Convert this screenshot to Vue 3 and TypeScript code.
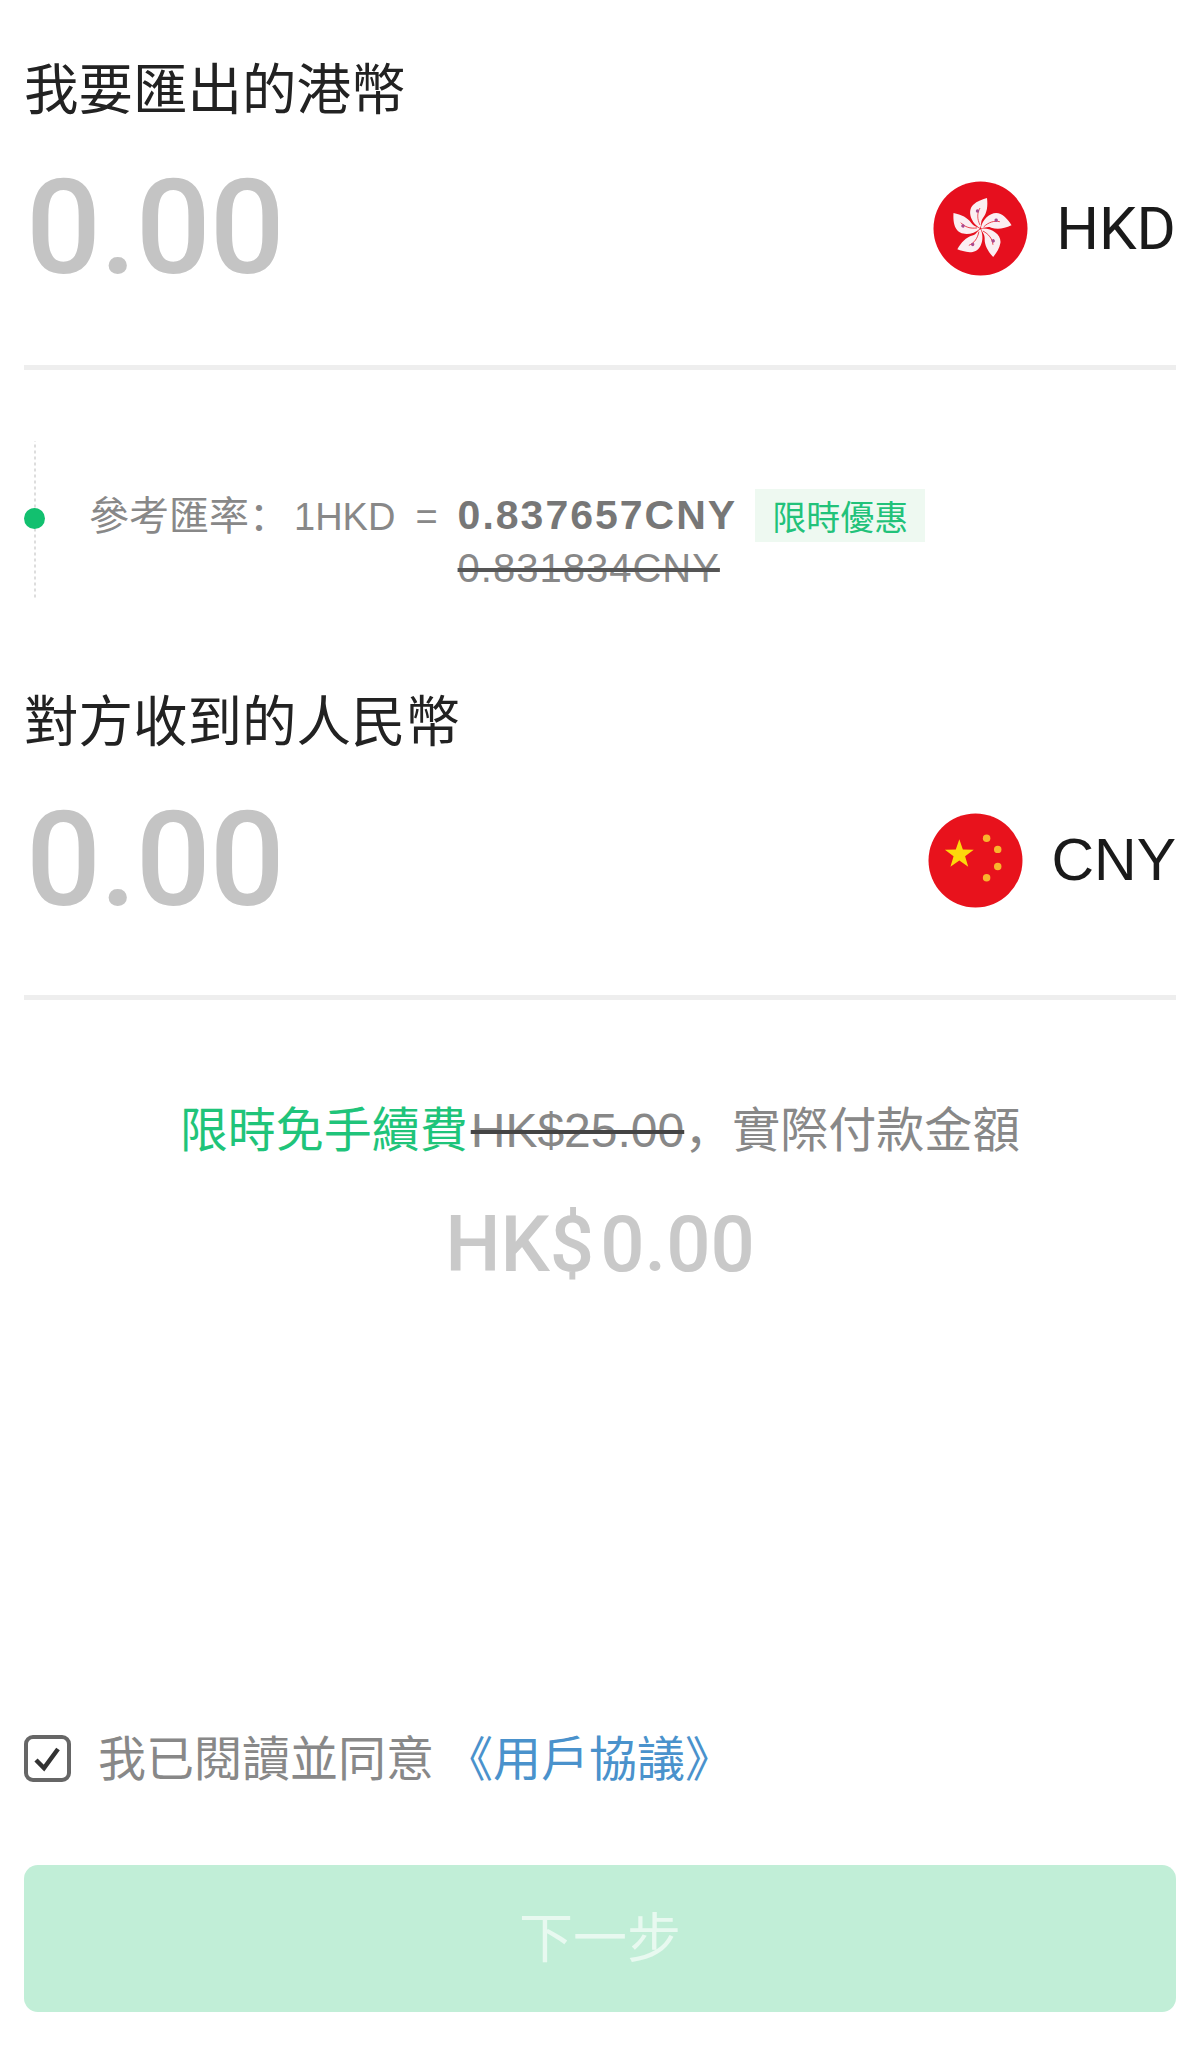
<script setup lang="ts">
// 紫荊花瓣的旋轉角度
const petals = [0, 72, 144, 216, 288];

// 國旗小星的位置
const smallStars = [
    { cx: 58, cy: 25 },
    { cx: 69, cy: 36 },
    { cx: 69, cy: 53 },
    { cx: 58, cy: 64 }
];
</script>

<template>
    <div class="page">
        <div class="field">
            <div class="field-label">我要匯出的港幣</div>
            <div class="field-row">
                <span class="amount">0.00</span>
                <div class="currency">
                    <svg class="flag" viewBox="0 0 95 95">
                        <circle cx="47.5" cy="47.5" r="47" fill="#e60f1e" />
                        <g v-for="deg in petals" :key="deg" :transform="`rotate(${deg} 47.5 47.5)`">
                            <path d="M47 47C38 42 34 30 40 24C44 20 50 18 54 17C55 25 54 32 50 37C47 41 49 44 47 47Z" fill="#fbeef2" />
                            <path d="M47 44C44 38 44 32 47 27" fill="none" stroke="#e60f1e" stroke-width="0.7" />
                            <circle cx="44.5" cy="30" r="1.7" fill="#a9488f" />
                        </g>
                    </svg>
                    <span class="currency-code currency-code-hkd">HKD</span>
                </div>
            </div>
        </div>

        <div class="rate">
            <div class="rate-rail">
                <span class="rate-dot"></span>
            </div>
            <div class="rate-prefix">
                <span>參考匯率<span class="punct">：</span></span><span class="rate-pair">1HKD</span><span class="rate-eq">=</span>
            </div>
            <div class="rate-values">
                <div class="rate-current">
                    <span class="rate-number">0.837657CNY</span>
                    <span class="rate-tag">限時優惠</span>
                </div>
                <div class="rate-old">0.831834CNY</div>
            </div>
        </div>

        <div class="field field-last">
            <div class="field-label">對方收到的人民幣</div>
            <div class="field-row">
                <span class="amount">0.00</span>
                <div class="currency">
                    <svg class="flag" viewBox="0 0 94 94">
                        <circle cx="47" cy="47" r="46.5" fill="#e8121c" />
                        <polygon points="31,26 34.5,36.2 45.3,36.4 36.7,42.9 39.8,53.3 31,47.1 22.2,53.3 25.3,42.9 16.7,36.4 27.5,36.2" fill="#fdd80b" />
                        <circle v-for="star in smallStars" :key="star.cy" :cx="star.cx" :cy="star.cy" r="3.7" fill="#f9b52c" />
                    </svg>
                    <span class="currency-code">CNY</span>
                </div>
            </div>
        </div>

        <div class="fee">
            <span class="fee-free">限時免手續費</span><span class="fee-old">HK$25.00</span><span class="punct">，</span>實際付款金額
        </div>
        <div class="total"><span class="total-symbol">HK$</span>0.00</div>

        <div class="agreement">
            <svg class="checkbox" viewBox="0 0 47 47">
                <rect x="2" y="2" width="43" height="43" rx="7" fill="none" stroke="#666" stroke-width="4" />
                <path d="M12 25L20 33L34 14" fill="none" stroke="#333" stroke-width="4.5" />
            </svg>
            <span class="agreement-text">我已閱讀並同意</span>
            <a class="agreement-text agreement-link">《用戶協議》</a>
        </div>

        <button class="next" type="button">下一步</button>
    </div>
</template>

<style scoped>
.page {
    box-sizing: border-box;
    display: flex;
    flex-direction: column;
    width: 1200px;
    height: 2066px;
    padding: 51px 24px 54px;
    background: #fff;
    font-family: "Noto Sans CJK TC", "Liberation Sans", sans-serif;
    color: #888;
}

.punct {
    font-family: "Noto Sans CJK SC", sans-serif;
}

/* 金額輸入區 */
.field {
    border-bottom: 5px solid #eee;
    padding-bottom: 67px;
}

.field-last {
    padding-bottom: 65px;
}

.field-label {
    font-size: 54.5px;
    line-height: 70px;
    color: #222;
}

.field-row {
    display: flex;
    justify-content: space-between;
    align-items: center;
    height: 140px;
    margin-top: 37px;
}

.amount {
    margin-left: 2px;
    font-family: Roboto, sans-serif;
    font-size: 132px;
    font-weight: 500;
    letter-spacing: -1px;
    line-height: 140px;
    color: #c4c4c4;
}

.currency {
    display: flex;
    align-items: center;
    gap: 28px;
}

.flag {
    width: 95px;
    height: 95px;
}

.currency-code {
    font-family: "Liberation Sans", sans-serif;
    font-size: 59px;
    color: #1a1a1a;
}

.currency-code-hkd {
    font-family: Roboto, sans-serif;
    font-size: 60px;
}

/* 參考匯率 */
.rate {
    display: flex;
    align-items: flex-start;
    height: 160px;
    margin: 68px 0 85px;
    font-family: "Noto Sans CJK TC", sans-serif;
}

.rate-rail {
    position: relative;
    flex: none;
    width: 21px;
    height: 157px;
    margin: 3px 44px 0 0;
    background: linear-gradient(#ddd 50%, transparent 50%) center / 2px 6px repeat-y;
}

.rate-dot {
    position: absolute;
    left: 0;
    top: 67px;
    width: 21px;
    height: 21px;
    border-radius: 50%;
    background: #12c06f;
}

.rate-prefix {
    flex: none;
    margin-top: 50px;
    font-size: 40px;
    line-height: 50px;
    white-space: nowrap;
}

.rate-pair {
    font-family: "Liberation Sans", sans-serif;
    font-size: 38px;
    margin-left: 5px;
}

.rate-eq {
    font-family: "Liberation Sans", sans-serif;
    font-size: 38px;
    margin: 0 20px 0 20px;
}

.rate-values {
    margin-top: 52px;
    font-family: "Liberation Sans", sans-serif;
}

.rate-current {
    display: flex;
    align-items: center;
    height: 50px;
}

.rate-number {
    font-size: 41px;
    font-weight: 700;
    letter-spacing: 2px;
    color: #777;
}

.rate-tag {
    margin-left: 18px;
    padding: 0 17px;
    font-family: "Noto Sans CJK TC", sans-serif;
    font-size: 34px;
    line-height: 53px;
    color: #22c27a;
    background: #eef9f1;
}

.rate-old {
    margin-top: 3px;
    font-size: 40px;
    letter-spacing: 1px;
    line-height: 50px;
    color: #888;
    text-decoration: line-through;
    text-decoration-color: #555;
}

/* 手續費 */
.fee {
    margin-top: 96px;
    font-size: 48px;
    line-height: 60px;
    text-align: center;
    white-space: nowrap;
}

.fee-free {
    color: #1fc47a;
}

.fee-old {
    font-family: "Liberation Sans", sans-serif;
    margin-left: 3px;
    text-decoration: line-through;
    text-decoration-color: #444;
}

.total {
    margin-top: 44px;
    font-family: Roboto, sans-serif;
    font-size: 78px;
    font-weight: 500;
    line-height: 80px;
    text-align: center;
    color: #c9c9c9;
}

.total-symbol {
    margin-right: 6px;
}

/* 協議 */
.agreement {
    display: flex;
    align-items: center;
    height: 60px;
    margin-top: auto;
    margin-bottom: 77px;
    font-size: 48px;
}

.checkbox {
    flex: none;
    width: 47px;
    height: 47px;
    margin-right: 27px;
}

.agreement-text {
    margin-bottom: 6px;
}

.agreement-link {
    margin-left: 11px;
    color: #4a92cc;
}

.next {
    flex: none;
    height: 147px;
    padding: 0 0 8px;
    border: 0;
    border-radius: 14px;
    background: #c1eed7;
    font-family: inherit;
    font-size: 54px;
    color: #e8f9f0;
}
</style>
